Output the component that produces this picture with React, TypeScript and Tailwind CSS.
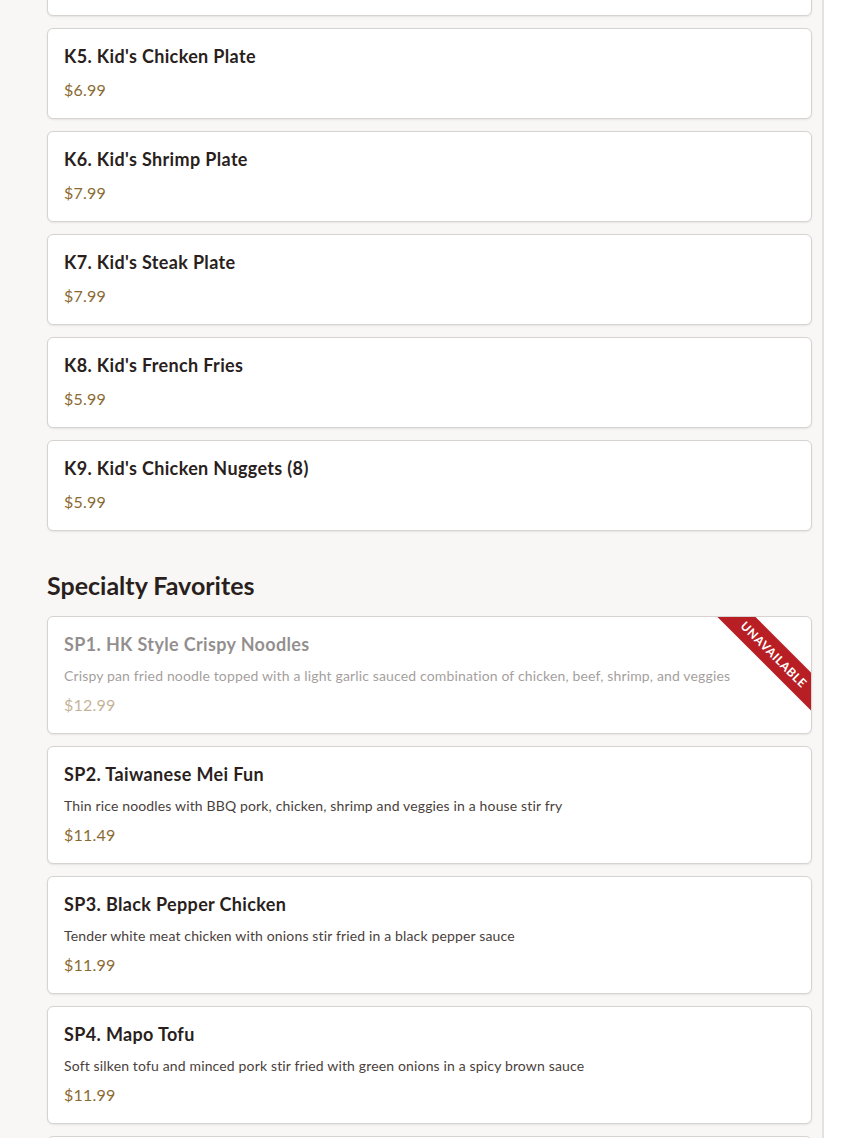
type MenuItem = {
  code: string;
  name: string;
  description?: string;
  price: string;
  unavailable?: boolean;
};

const kidsItems: MenuItem[] = [
  { code: "K5", name: "Kid's Chicken Plate", price: "$6.99" },
  { code: "K6", name: "Kid's Shrimp Plate", price: "$7.99" },
  { code: "K7", name: "Kid's Steak Plate", price: "$7.99" },
  { code: "K8", name: "Kid's French Fries", price: "$5.99" },
  { code: "K9", name: "Kid's Chicken Nuggets (8)", price: "$5.99" },
];

const specialtyItems: MenuItem[] = [
  {
    code: "SP1",
    name: "HK Style Crispy Noodles",
    description:
      "Crispy pan fried noodle topped with a light garlic sauced combination of chicken, beef, shrimp, and veggies",
    price: "$12.99",
    unavailable: true,
  },
  {
    code: "SP2",
    name: "Taiwanese Mei Fun",
    description: "Thin rice noodles with BBQ pork, chicken, shrimp and veggies in a house stir fry",
    price: "$11.49",
  },
  {
    code: "SP3",
    name: "Black Pepper Chicken",
    description: "Tender white meat chicken with onions stir fried in a black pepper sauce",
    price: "$11.99",
  },
  {
    code: "SP4",
    name: "Mapo Tofu",
    description: "Soft silken tofu and minced pork stir fried with green onions in a spicy brown sauce",
    price: "$11.99",
  },
];

const cardClass =
  "relative overflow-hidden rounded-md border border-[#d6d3d0] bg-white p-4 shadow-[0_1px_2px_rgba(0,0,0,0.08)]";

function MenuCard({ item }: { item: MenuItem }) {
  return (
    <article className={cardClass}>
      <div className={item.unavailable ? "opacity-50" : ""}>
        <h3 className="mb-[10px] text-[18px] font-bold leading-[23px] tracking-[0.35px] text-[#2a1f1d]">
          {item.code}. {item.name}
        </h3>
        {item.description ? (
          <p className="mb-[7px] text-[14px] leading-5 tracking-[0.15px] text-[#4a3f3c]">
            {item.description}
          </p>
        ) : null}
        <p className="text-[16px] leading-6 tracking-[0.2px] text-[#8a6a30]">{item.price}</p>
      </div>
      {item.unavailable ? (
        <div className="pointer-events-none absolute right-0 top-0 h-[94px] w-[94px] overflow-hidden">
          <div className="absolute left-[-13px] top-[24px] w-[140px] rotate-45 bg-[#b81f24] text-center text-[12px] font-bold uppercase leading-[27px] tracking-[0.6px] text-white">
            Unavailable
          </div>
        </div>
      ) : null}
    </article>
  );
}

export default function App() {
  return (
    <div className="flex h-[1138px] w-full overflow-hidden bg-white font-['Lato','Liberation_Sans',sans-serif]">
      <main className="w-[824px] shrink-0 border-r-2 border-[#e4e2df] bg-[#f8f7f5] pl-[47px] pr-[10px]">
        <div className="mt-[-75px] flex flex-col gap-3">
          {/* previous item, scrolled past the top */}
          <div className={`${cardClass} h-[91px]`} />
          {kidsItems.map((item) => (
            <MenuCard key={item.code} item={item} />
          ))}
        </div>

        <h2 className="mb-[15px] mt-[38px] text-[25px] font-bold leading-8 text-[#2a1f1d]">
          Specialty Favorites
        </h2>

        <div className="flex flex-col gap-3">
          {specialtyItems.map((item) => (
            <MenuCard key={item.code} item={item} />
          ))}
          {/* next item, below the fold */}
          <div className={`${cardClass} h-[118px]`} />
        </div>
      </main>
      <aside className="flex-1 bg-white" />
    </div>
  );
}
